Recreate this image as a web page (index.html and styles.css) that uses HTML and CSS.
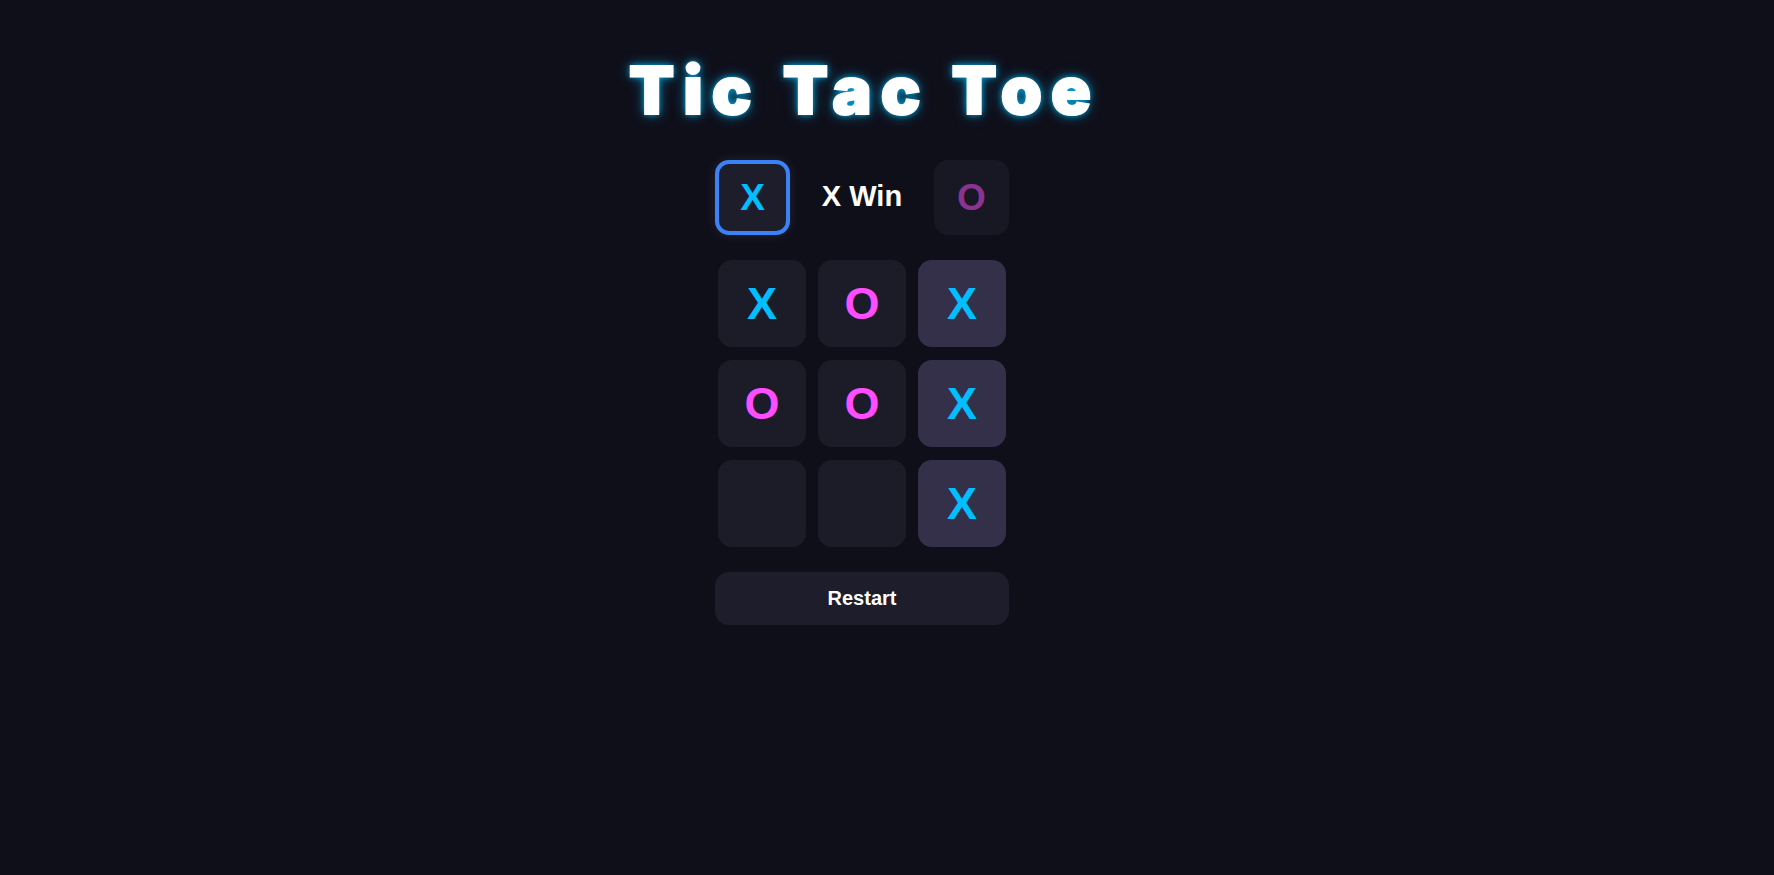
FILE: index.html
```html
<!DOCTYPE html>
<html lang="en">
<head>
<meta charset="utf-8">
<title>Tic Tac Toe</title>
<link rel="stylesheet" href="styles.css">
</head>
<body>
<main class="page">
  <h1 class="title">Tic Tac Toe</h1>
  <div class="status">
    <div class="turn turn-x active">X</div>
    <div class="status-text">X Win</div>
    <div class="turn turn-o">O</div>
  </div>
  <div class="board">
    <div class="cell x">X</div>
    <div class="cell o">O</div>
    <div class="cell x win">X</div>
    <div class="cell o">O</div>
    <div class="cell o">O</div>
    <div class="cell x win">X</div>
    <div class="cell"></div>
    <div class="cell"></div>
    <div class="cell x win">X</div>
  </div>
  <button class="restart">Restart</button>
</main>
</body>
</html>
```
FILE: styles.css
```css
html, body {
  margin: 0;
  padding: 0;
  background: #0f0f1a;
  height: 100%;
}

body {
  font-family: "Liberation Sans", Arial, sans-serif;
  color: #ffffff;
}

.page {
  display: flex;
  flex-direction: column;
  align-items: center;
  padding: 50px 50px 0 0;
}

.title {
  margin: 0 0 0 5px;
  font-family: Inter, "Liberation Sans", sans-serif;
  font-weight: 900;
  font-size: 66px;
  line-height: 80px;
  letter-spacing: 9px;
  color: #ffffff;
  -webkit-text-stroke: 2px #ffffff;
  text-shadow: 0 0 6px #00bfff, 0 0 14px rgba(0, 191, 255, 0.6);
}

.status {
  margin-top: 30px;
  width: 294px;
  display: flex;
  align-items: center;
  justify-content: space-between;
}

.turn {
  width: 75px;
  height: 75px;
  box-sizing: border-box;
  border-radius: 14px;
  display: flex;
  align-items: center;
  justify-content: center;
  font-weight: 700;
  font-size: 37px;
}

.turn-x {
  background: #1e1d2c;
  border: 4px solid #3b82f6;
  color: #00bfff;
  box-shadow: 0 0 12px rgba(190, 200, 255, 0.12);
}

.turn-o {
  background: #181724;
  color: #8b3391;
}

.status-text {
  font-weight: 700;
  font-size: 29px;
  color: #ffffff;
  padding-bottom: 3px;
}

.board {
  margin-top: 25px;
  display: grid;
  grid-template-columns: repeat(3, 88px);
  grid-template-rows: repeat(3, 87px);
  gap: 13px 12px;
}

.cell {
  background: #1c1b28;
  border-radius: 14px;
  display: flex;
  align-items: center;
  justify-content: center;
  font-weight: 700;
  font-size: 45px;
}

.cell.win {
  background: #34304a;
}

.cell.x {
  color: #00bfff;
}

.cell.o {
  color: #ff4dff;
}

.restart {
  margin-top: 25px;
  width: 294px;
  height: 53px;
  border: none;
  border-radius: 14px;
  background: #1e1d2b;
  color: #ffffff;
  font-family: "Liberation Sans", Arial, sans-serif;
  font-weight: 700;
  font-size: 20px;
}
```
